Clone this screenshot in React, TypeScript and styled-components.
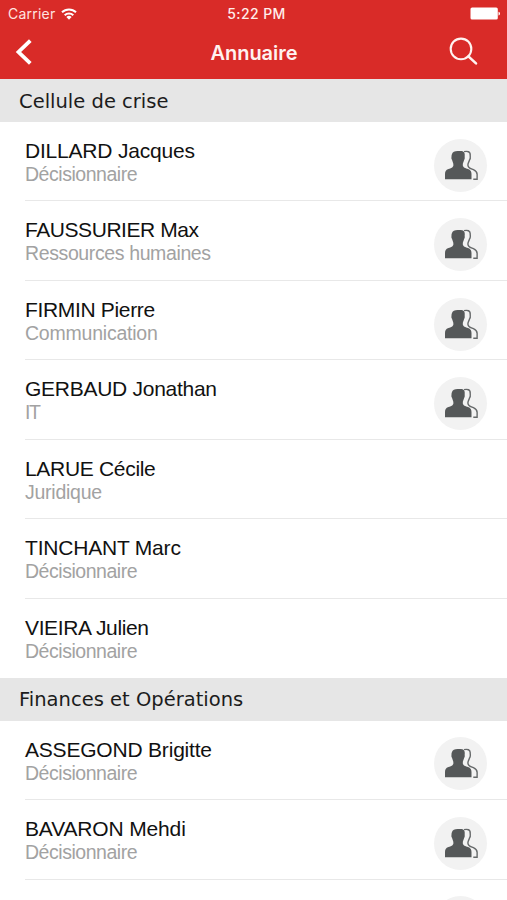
import React from 'react';
import styled, { createGlobalStyle } from 'styled-components';

const GlobalStyle = createGlobalStyle`
  * { box-sizing: border-box; }
  html, body { margin: 0; padding: 0; background: #fff; }
`;

const Screen = styled.div`
  width: 507px;
  height: 900px;
  overflow: hidden;
  background: #fff;
  font-family: 'Liberation Sans', Arial, sans-serif;
`;

const TopBar = styled.header`
  height: 79.3px;
  background: #d92b28;
  color: #fff;
  font-family: Inter, sans-serif;
`;

const StatusBar = styled.div`
  display: grid;
  grid-template-columns: 1fr auto 1fr;
  align-items: center;
  height: 27px;
  padding: 0 6px 0 8px;
  font-size: 13.5px;
  line-height: 20px;
`;

const Carrier = styled.div`
  display: flex;
  align-items: center;
  gap: 6px;
  font-size: 14px;
  letter-spacing: 0.22px;
  color: #ffe4e0;
`;

const Clock = styled.div`
  padding-left: 4px;
  font-weight: 500;
  font-size: 14px;
  letter-spacing: 0.42px;
  color: #ffeeeb;
`;

const BatterySlot = styled.div`
  display: flex;
  justify-content: flex-end;
`;

const NavBar = styled.nav`
  display: grid;
  grid-template-columns: 60px 1fr 60px;
  align-items: center;
  height: 50px;
`;

const NavButton = styled.button`
  display: flex;
  padding: 0 0 0 15px;
  border: 0;
  background: none;
  color: inherit;
`;

const SearchButton = styled(NavButton)`
  padding: 0 0 2px 2px;
`;

const Title = styled.h1`
  margin: 0;
  padding: 1px 0 0 1px;
  font-size: 20px;
  line-height: 24px;
  font-weight: 600;
  letter-spacing: -0.05px;
  text-align: center;
  color: #fff2f0;
`;

const SectionTitle = styled.h2`
  display: flex;
  align-items: center;
  height: 42.7px;
  margin: 0;
  padding: 2px 0 0 19px;
  background: #e6e6e6;
  color: #1c1c1c;
  font: 400 19.5px/24px 'DejaVu Sans', Verdana, sans-serif;
  letter-spacing: 0.01px;
`;

const List = styled.ul`
  margin: 0;
  padding: 0 0 0 25px;
  list-style: none;
`;

const Row = styled.li`
  display: flex;
  align-items: center;
  justify-content: space-between;
  height: 79.45px;
  padding: 8px 20px 0 0;
  border-bottom: 1px solid #e8e8e8;

  &:last-child { border-bottom-color: transparent; }
`;

const Person = styled.div`
  display: flex;
  flex-direction: column;
  padding-bottom: 5px;
`;

const Name = styled.span<{ $tracking: number }>`
  font-size: 21px;
  line-height: 24px;
  color: #111;
  letter-spacing: ${({ $tracking }) => $tracking}px;
`;

const Role = styled.span<{ $tracking: number }>`
  font-size: 19.5px;
  line-height: 23.5px;
  color: #a2a2a2;
  letter-spacing: ${({ $tracking }) => $tracking}px;
`;

const Badge = styled.div`
  display: flex;
  align-items: center;
  justify-content: center;
  width: 53px;
  height: 53px;
  border-radius: 50%;
  background: #f2f2f2;
`;

const WifiIcon = () => (
  <svg width="16" height="12" viewBox="0 0 16 12" fill="none" stroke="#fff" strokeWidth="2">
    <path d="M1 4.3a10 10 0 0 1 14 0M3.7 7.2a6.1 6.1 0 0 1 8.6 0" />
    <path d="M5.4 9.1a3.7 3.7 0 0 1 5.2 0L8 11.7Z" fill="#fff" stroke="none" />
  </svg>
);

const BatteryIcon = () => (
  <svg width="31" height="13" viewBox="0 0 31 13" fill="#fff">
    <rect x="0.5" y="0.5" width="27.3" height="12" rx="1.6" />
    <path d="M28.5 4.7c2 .3 2 3.3 0 3.7Z" />
  </svg>
);

const BackIcon = () => (
  <svg width="18" height="26" viewBox="0 0 18 26" fill="none" stroke="#fff" strokeWidth="3.8">
    <path d="M15.3 1.7 3.5 13l11.8 11.3" />
  </svg>
);

const SearchIcon = () => (
  <svg width="30" height="30" viewBox="0 0 30 30" fill="none" stroke="#fff3f0" strokeWidth="2.1">
    <circle cx="12" cy="12.9" r="10.3" />
    <path d="m19.4 20.4 7.6 7" strokeWidth="2.6" strokeLinecap="round" />
  </svg>
);

const PeopleIcon = () => (
  <svg width="34" height="31" viewBox="0 0 34 31">
    <path
      d="M20 1.6c3.4-.7 6.6-.2 6.2 3.9.2 1.7.5 3.4-.7 4.5-.5 2.1-1.6 2.8-1.6 4.9 0 3.3 3 3.7 5.5 4.8 2.4 1.1 3.6 2 3.7 4.4.1 1.6 0 3 0 5.2h-3.8"
      fill="none" stroke="#66696a" strokeWidth="1.4"
    />
    <path
      d="M8 4.1c.4-2.8 3.6-3.4 7.2-3.1 4.5-.4 6 1.5 5.5 5.2-.1 1.2.4 2.5-.5 3.5-.6 2.5-1.4 3-1.4 5.3 0 2.6 2.8 3.2 5.2 4.1 2.8 1 3.4 2.4 3.5 4.9v5.2H1V24c.1-2.5.7-3.9 3.5-4.9 2.4-.9 4.9-1.5 4.9-4.1 0-2.3-.8-2.8-1.4-5.3-.9-1-.5-2.3-.5-3.3-.1-.8.2-1.4.5-2.3Z"
      fill="#555859"
    />
  </svg>
);

interface Contact {
  name: string;
  role: string;
  nameTracking: number;
  grouped?: boolean;
}

const roleTracking: Record<string, number> = {
  'Décisionnaire': -0.46,
  'Ressources humaines': -0.38,
  'Communication': -0.22,
  'IT': -1.5,
  'Juridique': -0.25,
};

const sections: { title: string; contacts: Contact[] }[] = [
  {
    title: 'Cellule de crise',
    contacts: [
      { name: 'DILLARD Jacques', role: 'Décisionnaire', nameTracking: -0.2, grouped: true },
      { name: 'FAUSSURIER Max', role: 'Ressources humaines', nameTracking: -0.44, grouped: true },
      { name: 'FIRMIN Pierre', role: 'Communication', nameTracking: -0.33, grouped: true },
      { name: 'GERBAUD Jonathan', role: 'IT', nameTracking: -0.27, grouped: true },
      { name: 'LARUE Cécile', role: 'Juridique', nameTracking: -0.31 },
      { name: 'TINCHANT Marc', role: 'Décisionnaire', nameTracking: -0.2 },
      { name: 'VIEIRA Julien', role: 'Décisionnaire', nameTracking: -0.37 },
    ],
  },
  {
    title: 'Finances et Opérations',
    contacts: [
      { name: 'ASSEGOND Brigitte', role: 'Décisionnaire', nameTracking: -0.2, grouped: true },
      { name: 'BAVARON Mehdi', role: 'Décisionnaire', nameTracking: -0.15, grouped: true },
      { name: '', role: '', nameTracking: 0, grouped: true },
    ],
  },
];

export default function App() {
  return (
    <Screen>
      <GlobalStyle />
      <TopBar>
        <StatusBar>
          <Carrier>Carrier <WifiIcon /></Carrier>
          <Clock>5:22 PM</Clock>
          <BatterySlot><BatteryIcon /></BatterySlot>
        </StatusBar>
        <NavBar>
          <NavButton aria-label="Retour"><BackIcon /></NavButton>
          <Title>Annuaire</Title>
          <SearchButton aria-label="Rechercher"><SearchIcon /></SearchButton>
        </NavBar>
      </TopBar>
      {sections.map((section) => (
        <section key={section.title}>
          <SectionTitle>{section.title}</SectionTitle>
          <List>
            {section.contacts.map((c) => (
              <Row key={c.name}>
                <Person>
                  <Name $tracking={c.nameTracking}>{c.name}</Name>
                  <Role $tracking={roleTracking[c.role] ?? 0}>{c.role}</Role>
                </Person>
                {c.grouped && <Badge><PeopleIcon /></Badge>}
              </Row>
            ))}
          </List>
        </section>
      ))}
    </Screen>
  );
}
